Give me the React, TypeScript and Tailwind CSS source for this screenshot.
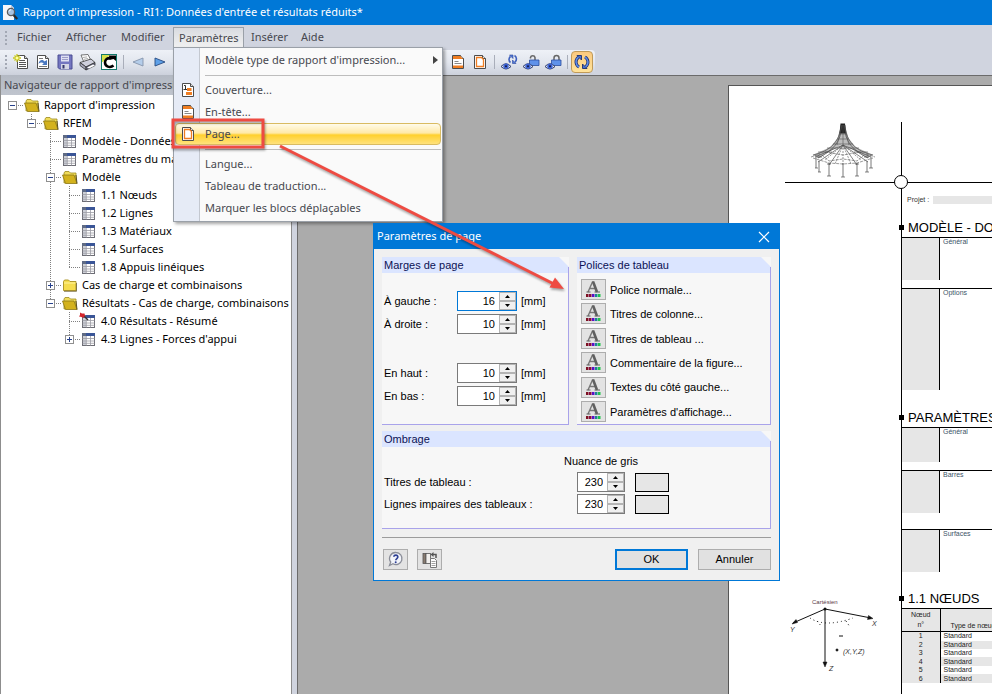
import type { ReactNode } from "react";
import clsx from "clsx";

/* ---------- icons ---------- */

function AppIcon() {
  return (
    <svg width="17" height="17" viewBox="0 0 17 17">
      <path d="M1 1h8l3 3v12H1z" fill="#f4f6fa" />
      <path d="M9 1v3h3z" fill="#b9c4d6" />
      <circle cx="9" cy="8" r="3.600" fill="#a9c4e2" stroke="#5b5b5b" strokeWidth="1.300" />
      <path d="M7 7.500a2.500 2.500 0 0 1 2-1.800" stroke="#fff" fill="none" />
      <path d="M11.600 11l3.600 4" stroke="#2b2b2b" strokeWidth="2.400" />
    </svg>
  );
}

function Sheet({ children }: { children?: ReactNode }) {
  return (
    <svg width="16" height="16" viewBox="0 0 16 16">
      <path d="M2.500 1.500h8l3 3v10h-11z" fill="#fff" stroke="#4d4d4d" />
      <path d="M10.500 1.500v3h3" fill="#ddd" stroke="#4d4d4d" />
      {children}
    </svg>
  );
}

function NewIcon() {
  return (
    <svg width="16" height="16" viewBox="0 0 16 16">
      <path d="M4.500 1.500h7l3 3v10h-10z" fill="#fff" stroke="#4d4d4d" />
      <path d="M11.500 1.500v3h3" fill="#ddd" stroke="#4d4d4d" />
      <path d="M6 6.500h6M6 8.500h7M6 10.500h7M6 12.500h7" stroke="#555" />
      <path d="M4 0v8M0 4h8M1.500 1.500l5 5M6.500 1.500l-5 5" stroke="#c8c81e" strokeWidth="1.300" />
      <circle cx="4" cy="4" r="1.500" fill="#ffffa0" />
    </svg>
  );
}

function OpenIcon() {
  return (
    <Sheet>
      <path d="M3.500 10C4 5.500 8 5 9.500 7.500L12 6v5H7l1.700-1.500C7.500 8 5 8 3.500 10z" fill="#4a78c0" />
      <path d="M4 12.500h8M4 4.500h4" stroke="#777" />
    </Sheet>
  );
}

function SaveIcon() {
  return (
    <svg width="16" height="16" viewBox="0 0 16 16">
      <path d="M1 1h14v14H2.500L1 13.500z" fill="#7476c0" stroke="#4a4c92" />
      <path d="M4 1.500h8v6H4z" fill="#dfe0f2" />
      <path d="M5 3.500h6M5 5.500h6" stroke="#9c9dc8" />
      <path d="M4 10h8v5H4z" fill="#d4d5e4" />
      <path d="M5.500 11h2v3.500h-2z" fill="#33356c" />
    </svg>
  );
}

function PrintIcon() {
  return (
    <svg width="17" height="17" viewBox="0 0 17 17">
      <path d="M2 1l7-.5 3 6-7 2z" fill="#fdfdfd" stroke="#555" strokeWidth="0.800" />
      <path d="M4 3.500l4-.6M5 5.300l4-.8" stroke="#999" strokeWidth="0.800" />
      <path d="M1 8.500L12 5l4 3.500-9 4.500z" fill="#cfd0dd" stroke="#333" strokeWidth="0.800" />
      <path d="M1 8.500v3L7 16v-3z" fill="#a5a6ba" stroke="#333" strokeWidth="0.800" />
      <path d="M7 13l9-4.500v3L7 16z" fill="#6b6c84" stroke="#333" strokeWidth="0.800" />
      <path d="M8 13.500l6-3 2 1-6 3z" fill="#fff" />
    </svg>
  );
}

function LogoIcon() {
  return (
    <svg width="16" height="16" viewBox="0 0 16 16">
      <rect x="0.500" y="0.500" width="15" height="15" fill="#fff" stroke="#127a6c" />
      <path d="M1 1h8L2 8H1z" fill="#d5e04a" />
      <path d="M12.500 11.500C9 14.500 4 12.500 4 8.500 4 5.500 6.500 3.800 9.500 4.200" fill="none" stroke="#000" strokeWidth="2.600" />
      <path d="M8 1.500h7V7l-2.500-2-4 1z" fill="#000" />
    </svg>
  );
}

function ArrowIcon({ back }: { back?: boolean }) {
  return (
    <svg width="12" height="10" viewBox="0 0 12 10">
      {back ? (
        <path d="M11 1v8L1 5z" fill="#b4cdea" stroke="#8694ac" strokeWidth="0.900" />
      ) : (
        <path d="M1 1v8l10-4z" fill="#5ea0e8" stroke="#274a80" strokeWidth="0.900" />
      )}
    </svg>
  );
}

function CoverIcon() {
  return (
    <Sheet>
      <path d="M4 3.500h1.500v4M3.500 7.500h4" stroke="#333" fill="none" />
      <path d="M7 6h4.500v3H7zM6 10h6v3H6z" fill="#ef7d22" />
    </Sheet>
  );
}

function HeaderIcon() {
  return (
    <Sheet>
      <path d="M3 2h7.500l2.500 3H3zM3 11.500h10V14H3z" fill="#ef7d22" />
      <path d="M4.500 7.500h4M4.500 9.500h7" stroke="#888" />
    </Sheet>
  );
}

function PageIcon() {
  return (
    <Sheet>
      <path d="M4.500 3.500h5l2 2v7h-7z" fill="#fff" stroke="#ef7d22" strokeWidth="1.300" />
    </Sheet>
  );
}

function Eye() {
  return (
    <>
      <path d="M0 12.500q5-5.500 10 0-5 5-10 0z" fill="#dfe6f5" stroke="#2e3c66" strokeWidth="1" />
      <circle cx="5" cy="12.300" r="2.700" fill="#3e63d2" />
      <circle cx="5" cy="12.300" r="1" fill="#111a44" />
    </>
  );
}

function EyeRefreshIcon() {
  return (
    <svg width="17" height="17" viewBox="0 0 17 17">
      <Eye />
      <path d="M9.500 8.500C7.500 7 7.500 4 9.500 2.500M13.500 1.500c2.500 1.500 2.500 5 .5 6.500" fill="none" stroke="#3d5fbe" strokeWidth="1.600" />
      <path d="M8.500 1h3.500v3.500zM15 9.500h-3.500V6z" fill="#4f78d8" stroke="#2c479c" strokeWidth="0.600" />
    </svg>
  );
}

function EyeLockIcon({ open }: { open?: boolean }) {
  return (
    <svg width="17" height="17" viewBox="0 0 17 17">
      <path
        d={open ? "M7.500 4.500v-1a2.300 2.300 0 0 1 4.500 0V6" : "M9 6V4a2.500 2.500 0 0 1 5 0v2"}
        fill="none"
        stroke="#666"
        strokeWidth="1.500"
      />
      <path d="M6.500 6h9.500v5.500h-9.500z" fill="#5f92ea" stroke="#2b4c9c" strokeWidth="0.800" />
      <Eye />
    </svg>
  );
}

function RefreshIcon() {
  return (
    <svg width="16" height="16" viewBox="0 0 16 16">
      <path d="M5 13C1.500 11 .8 6 4.500 3.200M11 3c3.500 2 4.200 7 .5 9.800" fill="none" stroke="#1e2f6c" strokeWidth="3" />
      <path d="M3 1.500h4.500V6zM13 14.500H8.500V10z" fill="#4470d8" stroke="#1e2f6c" strokeWidth="0.900" />
      <path d="M5 13C1.500 11 .8 6 4.500 3.200M11 3c3.500 2 4.200 7 .5 9.800" fill="none" stroke="#5d8cec" strokeWidth="1.500" />
    </svg>
  );
}

function FolderIcon({ open }: { open?: boolean }) {
  return open ? (
    <svg width="16" height="13" viewBox="0 0 16 13">
      <path d="M2 12V2l1-1.500h4L8.500 2H14v8z" fill="#f0dc5a" stroke="#9c8a20" strokeWidth="0.800" />
      <path d="M0.500 4H12l3 8.500H3.500z" fill="#d3b21e" stroke="#8b7714" strokeWidth="0.800" />
      <path d="M14 4l1 8.500" stroke="#5c5020" />
    </svg>
  ) : (
    <svg width="16" height="13" viewBox="0 0 16 13">
      <path d="M1.500 11.500v-9L2.500 1h4l1.500 1.500h6v9z" fill="#f5dc4e" stroke="#a8901e" strokeWidth="0.900" />
      <path d="M2 4h11.500" stroke="#fff3a0" />
      <path d="M2 12.300h12.500V4" fill="none" stroke="#6b6030" strokeWidth="0.800" />
    </svg>
  );
}

function TableIcon({ pinned }: { pinned?: boolean }) {
  return (
    <svg width="16" height="14" viewBox="0 0 16 14" className="overflow-visible">
      <rect x="1.500" y="1.500" width="12" height="12" fill="#fff" stroke="#6d6d75" />
      <rect x="1" y="1" width="13" height="3" fill="#3a5597" />
      <rect x="1" y="1" width="4" height="3" fill="#5f6b85" />
      <path d="M2 4h3v9H2z" fill="#cdd0d8" />
      <path d="M1.500 6.500h12M1.500 9h12M1.500 11.300h12M5.300 4v9.500M9.500 4v9.500" stroke="#9c9ca4" strokeWidth="0.800" />
      {pinned && (
        <>
          <path d="M3 2l4 4" stroke="#333" strokeWidth="1.400" />
          <path d="M-1-1.500l2 1L3.500-.5 4 1.500 3.500 2.500 2 4 .5 3-2 2.500-1 1z" fill="#d3262c" />
        </>
      )}
    </svg>
  );
}

function FontIcon() {
  return (
    <svg width="17" height="17" viewBox="0 0 17 17">
      <path d="M3 11L7.500 1h1M5 7.500h6" fill="none" stroke="#777" strokeWidth="1.400" />
      <path d="M8 0.500L12 11" stroke="#606060" strokeWidth="2.600" />
      <path d="M1.500 11h4M9.500 11H15" stroke="#606060" strokeWidth="1.200" />
      <rect x="1" y="13" width="2.500" height="3" fill="#7c1022" />
      <rect x="4" y="13" width="2.500" height="3" fill="#8a0a3c" />
      <rect x="7" y="13" width="2.500" height="3" fill="#5a10c8" />
      <rect x="10" y="13" width="2.500" height="3" fill="#1a8494" />
      <rect x="13" y="13" width="2.500" height="3" fill="#1fc44a" />
    </svg>
  );
}

function HelpIcon() {
  return (
    <svg width="17" height="17" viewBox="0 0 17 17">
      <path d="M9 1.500a6 6 0 1 1-3 11.200L2.500 14.500l1.200-3.500A6 6 0 0 1 9 1.500z" fill="#f2f4fa" stroke="#8a8d98" strokeWidth="1.300" />
      <path d="M6.800 5.800C7 3.500 11 3.500 10.800 6c0 1.500-2 1.600-2 3.300" fill="none" stroke="#2d3f94" strokeWidth="1.700" />
      <circle cx="8.700" cy="11.200" r="1" fill="#2d3f94" />
    </svg>
  );
}

function DefaultsIcon() {
  return (
    <svg width="18" height="18" viewBox="0 0 18 18">
      <rect x="2" y="2.500" width="3" height="10" fill="#8a7c70" stroke="#555" strokeWidth="0.800" />
      <rect x="5" y="2.500" width="4.500" height="10" fill="#f2f0ee" stroke="#555" strokeWidth="0.800" />
      <path d="M11.500 3.500H15V7" fill="none" stroke="#555" strokeWidth="1.500" />
      <path d="M12.500 1L9.500 3.500l3 2.500z" fill="#555" />
      <path d="M9.500 7.500h4l2 2v7h-6z" fill="#fff" stroke="#777" />
      <path d="M10.500 10.500h4M10.500 12.500h4M10.500 14.500h4" stroke="#888" strokeWidth="0.800" />
    </svg>
  );
}

function TentDrawing() {
  return (
    <svg width="66" height="58" viewBox="0 0 66 58" fill="none" stroke="#555" strokeWidth="0.600">
      <path d="M31.500 2h3l4 14 7 9 18 8-6 3-25-14-24 14-6-3 18-8 7-9z" fill="#bdbdbd" stroke="none" />
      <path d="M30.500 1.500h4.500l1 10h-6.500z" fill="#222" stroke="none" />
      <path d="M31 3C30 20 20 29 3 33M35 3c1 17 11 26 28 30M32 3c-1 18-10 26-24 33M34 3c1 18 10 26 24 33" stroke="#333" />
      <path d="M33 3v20M32 3l-5 20M34 3l5 20M29 12h8M27 17h12M23 22h20M17 26h32M8 30h14M44 30h14" />
      <path d="M33 23L19 43M33 23l14 20M33 23L8 40M33 23l25 17M33 23L5 35M33 23l28 12" stroke="#333" />
      <path d="M33 23v20M33 23l-8 19M33 23l8 19M33 23l-18 15M33 23l18 15" strokeDasharray="2 1" />
      <path d="M1 35l9-3M56 32l9 3M3 36l16 5 14 1 14-1 16-5M12 33l7 6 14-2 14 2 7-6M15 30l18 3 18-3" strokeDasharray="3 1" />
      <path d="M6 35v11M9 39v11M19 41v13M33 41v14M47 41v13M57 39v11M61 35v11" stroke="#555" strokeWidth="0.800" />
      <path d="M5 46h3M8 50h3M17 54h4M31 55h4M45 54h4M55 50h4M59 46h4M7 35h5M54 35h5M17 42h4M45 42h4" stroke="#333" />
    </svg>
  );
}

function AxesDrawing() {
  return (
    <svg width="96" height="76" viewBox="0 0 96 76" stroke="#111" fill="none" className="font-['Liberation_Sans',Arial,sans-serif]">
      <path d="M40 12L8 26M40 12l46 9M40 12v55" />
      <path d="M7 27l4-4.500 1.500 3zM88 21.500l-4.500-3-1 4zM40 70l-2-5h4z" fill="#111" strokeWidth="0.500" />
      <circle cx="40" cy="12" r="1.500" fill="#111" stroke="none" />
      <path d="M25 21q15 10 43 0M32 24l5 6M61 24l4 6" strokeDasharray="1 3" />
      <path d="M54 39h4" />
      <circle cx="52" cy="53" r="1" fill="#111" />
      <g fill="#333" stroke="none" fontSize="7" fontStyle="italic">
        <text x="27" y="7" fontStyle="normal" fontSize="6" fill="#5a3a48">Cartésien</text>
        <text x="5" y="35">Y</text>
        <text x="87" y="29">X</text>
        <text x="44" y="74">Z</text>
        <text x="58" y="57">(X,Y,Z)</text>
      </g>
    </svg>
  );
}

/* ---------- menu bar & toolbar ---------- */

function Grip() {
  return (
    <span className="flex w-2 flex-col items-center gap-[2px]">
      <i className="size-[2px] bg-[#a3a8b4]" />
      <i className="size-[2px] bg-[#a3a8b4]" />
      <i className="size-[2px] bg-[#a3a8b4]" />
      <i className="size-[2px] bg-[#a3a8b4]" />
    </span>
  );
}

function MenuItem({ label, icon, active, submenu }: { label: string; icon?: ReactNode; active?: boolean; submenu?: boolean }) {
  return (
    <button
      type="button"
      role="menuitem"
      className={clsx(
        "flex h-[22px] w-full items-center rounded-sm border pl-1 text-left",
        active
          ? "border-[#d9bb62] bg-[linear-gradient(#fffbea_0%,#ffe9a8_45%,#ffd02e_55%,#ffe27c_100%)]"
          : "border-transparent",
      )}
    >
      <span className="flex w-[25px] shrink-0">{icon}</span>
      <span className="flex-1 whitespace-nowrap">{label}</span>
      {submenu && (
        <svg width="5" height="8" viewBox="0 0 5 8" className="mr-[2px]">
          <path d="M0 0v8l5-4z" fill="#444" />
        </svg>
      )}
    </button>
  );
}

function MenuSeparator() {
  return <div className="mt-1 mb-[3px] ml-[30px] h-px bg-[#bdbdbd]" />;
}

function ParametersMenu() {
  return (
    <div
      role="menu"
      className="absolute -left-px top-[19px] z-20 w-[270px] border border-[#9aa0a8] bg-[linear-gradient(90deg,#e6ebf6_25px,#c4c8d0_25px,#c4c8d0_26px,#fafafa_26px)] px-px pt-px pb-[2px] shadow-[2px_2px_3px_rgba(0,0,0,0.35)]"
    >
      <MenuItem label="Modèle type de rapport d'impression..." submenu />
      <MenuSeparator />
      <MenuItem label="Couverture..." icon={<CoverIcon />} />
      <MenuItem label="En-tête..." icon={<HeaderIcon />} />
      <MenuItem label="Page..." icon={<PageIcon />} active />
      <MenuSeparator />
      <MenuItem label="Langue..." />
      <MenuItem label="Tableau de traduction..." />
      <MenuItem label="Marquer les blocs déplaçables" />
    </div>
  );
}

function MenuBar() {
  return (
    <nav className="flex h-[25px] items-center pl-[2px] text-[11px] text-[#47484f]">
      <Grip />
      <button type="button" className="ml-[7px] w-[35px] text-left">Fichier</button>
      <button type="button" className="ml-[14px] w-[40px] text-left">Afficher</button>
      <button type="button" className="ml-[15px] w-[44px] text-left">Modifier</button>
      <div className="relative ml-2 h-[21px] border border-b-0 border-[#9aa0a8] bg-gradient-to-b from-[#d9dbe0] to-[#f2f2f2] px-[5px]">
        <button type="button" aria-haspopup="menu" aria-expanded="true" className="h-full w-[59px] text-left">
          Paramètres
        </button>
        <ParametersMenu />
      </div>
      <button type="button" className="ml-[7px] w-[36px] text-left">Insérer</button>
      <button type="button" className="ml-[14px]">Aide</button>
    </nav>
  );
}

function Tool({ label, children, active }: { label: string; children: ReactNode; active?: boolean }) {
  return (
    <button
      type="button"
      aria-label={label}
      className={clsx(
        "flex h-[22px] w-[22px] items-center justify-center",
        active && "rounded-sm border border-[#c09a58] bg-gradient-to-b from-[#fbc97e] to-[#ffe39a]",
      )}
    >
      {children}
    </button>
  );
}

function Divider() {
  return <span className="mx-[3px] h-[14px] w-px bg-[#a9aeba]" />;
}

function Toolbar() {
  return (
    <div className="flex h-[25px] w-[595px] items-center rounded-r bg-gradient-to-b from-[#eef1f7] via-[#e2e6ee] to-[#ccd1dc] pr-[2px] pb-px pl-[2px]">
      <Grip />
      <Tool label="Nouveau"><NewIcon /></Tool>
      <Tool label="Ouvrir"><OpenIcon /></Tool>
      <Tool label="Enregistrer"><SaveIcon /></Tool>
      <Tool label="Imprimer"><PrintIcon /></Tool>
      <Tool label="Dlubal"><LogoIcon /></Tool>
      <Divider />
      <Tool label="Précédent"><ArrowIcon back /></Tool>
      <Tool label="Suivant"><ArrowIcon /></Tool>
      <span className="flex-1" />
      <Tool label="En-tête"><HeaderIcon /></Tool>
      <Tool label="Page"><PageIcon /></Tool>
      <Divider />
      <Tool label="Actualiser la vue"><EyeRefreshIcon /></Tool>
      <Tool label="Déverrouiller"><EyeLockIcon open /></Tool>
      <Tool label="Verrouiller"><EyeLockIcon /></Tool>
      <Divider />
      <Tool label="Actualiser" active><RefreshIcon /></Tool>
    </div>
  );
}

/* ---------- navigator ---------- */

type Node = {
  label: string;
  level: number;
  icon: "open" | "closed" | "table" | "pinned";
  toggle?: "+" | "-";
  last?: boolean;
  guide?: boolean; // parent's branch continues below this row
};

const nodes: Node[] = [
  { label: "Rapport d'impression", level: 0, icon: "open", toggle: "-" },
  { label: "RFEM", level: 1, icon: "open", toggle: "-", last: true },
  { label: "Modèle - Données", level: 2, icon: "table" },
  { label: "Paramètres du maillage", level: 2, icon: "table" },
  { label: "Modèle", level: 2, icon: "open", toggle: "-" },
  { label: "1.1 Nœuds", level: 3, icon: "table", guide: true },
  { label: "1.2 Lignes", level: 3, icon: "table", guide: true },
  { label: "1.3 Matériaux", level: 3, icon: "table", guide: true },
  { label: "1.4 Surfaces", level: 3, icon: "table", guide: true },
  { label: "1.8 Appuis linéiques", level: 3, icon: "table", guide: true, last: true },
  { label: "Cas de charge et combinaisons", level: 2, icon: "closed", toggle: "+" },
  { label: "Résultats - Cas de charge, combinaisons", level: 2, icon: "open", toggle: "-", last: true },
  { label: "4.0 Résultats - Résumé", level: 3, icon: "pinned" },
  { label: "4.3 Lignes - Forces d'appui", level: 3, icon: "table", toggle: "+", last: true },
];

function Branch({ node }: { node: Node }) {
  return (
    <svg width="21" height="18" viewBox="0 0 21 18" fill="none" stroke="#808080" className="shrink-0">
      {node.level > 0 && <path d={node.last ? "M9.500 0v10" : "M9.500 0v18"} strokeDasharray="1 1" />}
      <path d="M9 9.500h12" strokeDasharray="1 1" />
      {node.toggle && (
        <>
          <rect x="5.500" y="5.500" width="8" height="8" fill="#fff" stroke="#8f8f8f" />
          <path d={node.toggle === "+" ? "M7 9.500h5M9.500 7v5" : "M7 9.500h5"} stroke="#27418c" />
        </>
      )}
    </svg>
  );
}

function TreeRow({ node }: { node: Node }) {
  return (
    <li className="flex h-[18px] items-center whitespace-nowrap">
      {Array.from({ length: node.level }, (_, i) => (
        <svg key={i} width="19" height="18" viewBox="0 0 19 18" className="shrink-0">
          {node.guide && i === 2 && <path d="M9.500 0v18" stroke="#808080" strokeDasharray="1 1" />}
        </svg>
      ))}
      <Branch node={node} />
      <span className="flex w-5 shrink-0">
        {node.icon === "open" && <FolderIcon open />}
        {node.icon === "closed" && <FolderIcon />}
        {node.icon === "table" && <TableIcon />}
        {node.icon === "pinned" && <TableIcon pinned />}
      </span>
      <span>{node.label}</span>
    </li>
  );
}

function Navigator() {
  return (
    <aside className="flex w-[292px] shrink-0 flex-col overflow-hidden border-x border-[#8d8d8d] bg-white text-[11px]">
      <h2 className="h-5 shrink-0 whitespace-nowrap bg-gradient-to-b from-[#b3b9c3] to-[#c0c5ce] pl-[3px] leading-5 text-[#47484f]">
        Navigateur de rapport d'impression
      </h2>
      <ul className="pt-px pl-[2px] text-black">
        {nodes.map((n) => (
          <TreeRow key={n.label} node={n} />
        ))}
      </ul>
    </aside>
  );
}

/* ---------- printout page ---------- */

function Title({ children }: { children: ReactNode }) {
  return (
    <h3 className="relative h-5 pl-[6px] text-[13px] leading-[22px] whitespace-nowrap text-black">
      <i className="absolute top-2 -left-[3px] size-[5px] bg-black" />
      {children}
    </h3>
  );
}

function Block({ label, className }: { label: string; className: string }) {
  return (
    <div className="border-t border-black">
      <div className={clsx("flex", className)}>
        <div className="w-[38px] border-r border-black bg-[#e6e6e6]" />
        <p className="pl-[3px] text-[7px] leading-[8px] text-[#3c5468]">{label}</p>
      </div>
    </div>
  );
}

function ReportPage() {
  return (
    <article className="ml-[430px] mt-[9px] min-w-[400px] flex-1 border-t border-l border-[#555] bg-white pt-9 font-['Liberation_Sans',Arial,sans-serif]">
      <header className="flex h-[60px]">
        <div className="w-[172px] shrink-0 pl-[81px]">
          <TentDrawing />
        </div>
        <div className="flex-1 border-l border-black" />
      </header>
      <div className="relative ml-14 h-px bg-black">
        <i className="absolute -top-[7px] left-[109px] size-[14px] rounded-full border border-black bg-white" />
      </div>
      <div className="flex min-h-[520px]">
        <div className="w-[172px] shrink-0 pt-[414px] pl-[56px]">
          <AxesDrawing />
        </div>
        <div className="flex-1 border-l border-black pt-3">
          <div className="flex h-[9px] items-center gap-1 pl-[5px] text-[7px] leading-[8px] text-[#333]">
            <span>Projet :</span>
            <span className="h-2 flex-1 bg-[#e6e6e6]" />
          </div>
          <div className="h-[13px]" />
          <Title>MODÈLE - DONNÉES</Title>
          <Block label="Général" className="h-[42px]" />
          <div className="h-2" />
          <Block label="Options" className="h-[101px]" />
          <div className="h-[17px]" />
          <Title>PARAMÈTRES</Title>
          <Block label="Général" className="h-[34px]" />
          <div className="h-2" />
          <Block label="Barres" className="h-[42px]" />
          <div className="h-4" />
          <Block label="Surfaces" className="h-[42px]" />
          <div className="h-4" />
          <Title>1.1 NŒUDS</Title>
          <table className="h-[75px] w-full border-collapse border-t border-black text-[7px] leading-[8px] text-[#222]">
            <thead>
              <tr className="h-[23px] border-b border-black bg-[#e6e6e6]">
                <th className="w-[38px] border-r border-black text-center leading-[10px] font-normal">
                  Nœud
                  <br />
                  n°
                </th>
                <th className="pl-[10px] text-left align-bottom leading-[10px] font-normal whitespace-nowrap">Type de nœud</th>
              </tr>
            </thead>
            <tbody>
              {[1, 2, 3, 4, 5, 6].map((n) => (
                <tr key={n} className="even:bg-[#e6e6e6]">
                  <td className="border-r border-black bg-[#e6e6e6] text-center">{n}</td>
                  <td className="pl-[3px]">Standard</td>
                </tr>
              ))}
            </tbody>
          </table>
        </div>
      </div>
    </article>
  );
}

/* ---------- dialog ---------- */

function Group({ title, className, children }: { title: string; className?: string; children: ReactNode }) {
  return (
    <div role="group" aria-label={title} className={clsx("relative flex flex-col border-b border-[#a9a3ea] bg-[#f7f7f7]", className)}>
      <h3 className="h-4 bg-[#dbe5ff] pl-[2px] leading-4 text-[#0c1254] [clip-path:polygon(0_0,calc(100%-10px)_0,100%_10px,100%_100%,0_100%)]">
        {title}
      </h3>
      <i className="absolute top-[10px] right-0 bottom-0 w-px bg-[#a9a3ea]" />
      {children}
    </div>
  );
}

function Spin({ id, value, focused, narrow }: { id: string; value: number; focused?: boolean; narrow?: boolean }) {
  return (
    <span className={clsx("flex h-5 border bg-white", narrow ? "w-12" : "w-[60px]", focused ? "border-[#0078d7]" : "border-[#7a7a7a]")}>
      <input id={id} type="text" defaultValue={value} className="w-full min-w-0 flex-1 pr-1 text-right outline-none" />
      <span className="flex w-[17px] shrink-0 flex-col bg-[#f0f0f0]">
        <button type="button" aria-label="Augmenter" className="flex flex-1 items-center justify-center border border-[#b4b4b4]">
          <svg width="5" height="3" viewBox="0 0 5 3"><path d="M0 3h5L2.500 0z" /></svg>
        </button>
        <button type="button" aria-label="Diminuer" className="flex flex-1 items-center justify-center border border-[#b4b4b4]">
          <svg width="5" height="3" viewBox="0 0 5 3"><path d="M0 0h5L2.500 3z" /></svg>
        </button>
      </span>
    </span>
  );
}

function MarginRow({ id, label, value, focused }: { id: string; label: string; value: number; focused?: boolean }) {
  return (
    <div className="flex items-center">
      <label htmlFor={id} className="w-[73px]">{label}</label>
      <Spin id={id} value={value} focused={focused} />
      <span className="ml-1">[mm]</span>
    </div>
  );
}

function ShadeRow({ id, label }: { id: string; label: string }) {
  return (
    <div className="flex items-center">
      <label htmlFor={id} className="w-[193px]">{label}</label>
      <Spin id={id} value={230} narrow />
      <span className="ml-[10px] h-[19px] w-[34px] border border-black bg-[#e6e6e6]" />
    </div>
  );
}

const fontButtons = [
  "Police normale...",
  "Titres de colonne...",
  "Titres de tableau ...",
  "Commentaire de la figure...",
  "Textes du côté gauche...",
  "Paramètres d'affichage...",
];

function PageDialog() {
  return (
    <section
      role="dialog"
      aria-label="Paramètres de page"
      className="absolute top-[223px] left-[373px] z-30 w-[407px] border border-[#0078d7] bg-[#f0f0f0] text-[11px] text-black"
    >
      <header className="flex h-[25px] items-center justify-between bg-[#0078d7] pr-[9px] pl-[3px] text-white">
        <h2>Paramètres de page</h2>
        <button type="button" aria-label="Fermer">
          <svg width="12" height="12" viewBox="0 0 12 12"><path d="M1 1l10 10M11 1L1 11" stroke="#fff" strokeWidth="1.200" /></svg>
        </button>
      </header>

      <div className="px-2 pt-2 pb-[10px] font-['Liberation_Sans',Arial,sans-serif]">
        <div className="flex gap-2">
          <Group title="Marges de page" className="w-[187px]">
            <div className="flex flex-col gap-[3px] pt-[18px] pl-[2px]">
              <MarginRow id="left" label="À gauche :" value={16} focused />
              <MarginRow id="right" label="À droite :" value={10} />
              <div className="h-[23px]" />
              <MarginRow id="top" label="En haut :" value={10} />
              <MarginRow id="bottom" label="En bas :" value={10} />
            </div>
          </Group>
          <Group title="Polices de tableau" className="h-[168px] flex-1">
            <div className="flex flex-1 flex-col justify-between pt-[6px] pb-[2px] pl-1">
              {fontButtons.map((label, i) => (
                <div key={label} className="flex items-center gap-1">
                  <button
                    type="button"
                    id={`font-${i}`}
                    className="flex h-[21px] w-[25px] items-center justify-center border border-[#adadad] bg-[#e3e3e3]"
                  >
                    <FontIcon />
                  </button>
                  <label htmlFor={`font-${i}`} className="pt-px">{label}</label>
                </div>
              ))}
            </div>
          </Group>
        </div>

        <Group title="Ombrage" className="mt-[6px] h-[98px]">
          <div className="pt-[6px] pl-[2px]">
            <p className="pl-[180px] leading-4">Nuance de gris</p>
            <div className="mt-[3px] flex flex-col gap-[2px]">
              <ShadeRow id="shade-titles" label="Titres de tableau :" />
              <ShadeRow id="shade-rows" label="Lignes impaires des tableaux :" />
            </div>
          </div>
        </Group>

        <hr className="mt-2 border-[#9c9c9c]" />

        <footer className="mt-[11px] flex h-[21px] pl-px">
          <button type="button" aria-label="Aide" className="flex w-[25px] items-center justify-center border border-[#adadad] bg-[#e3e3e3]">
            <HelpIcon />
          </button>
          <button type="button" aria-label="Valeurs par défaut" className="ml-[9px] flex w-[25px] items-center justify-center border border-[#adadad] bg-[#e3e3e3]">
            <DefaultsIcon />
          </button>
          <button type="button" className="ml-auto w-[73px] border-2 border-[#0078d7] bg-[#e1e1e1]">OK</button>
          <button type="button" className="ml-[10px] w-[73px] border border-[#adadad] bg-[#e1e1e1]">Annuler</button>
        </footer>
      </div>
    </section>
  );
}

// Red frame around the menu entry and the arrow to the dialog
function Annotation() {
  return (
    <svg width="400" height="180" viewBox="0 0 400 180" className="pointer-events-none absolute top-[117px] left-[170px] z-40 drop-shadow-[1px_2px_1px_rgba(0,0,0,0.35)]">
      <rect x="3" y="3" width="90" height="27" fill="none" stroke="#ee4b42" strokeWidth="3" />
      <path d="M110 29L384 167" stroke="#ee4b42" strokeWidth="3" />
      <path d="M394 172l-14.500-1.500 5.500-10z" fill="#ee4b42" />
    </svg>
  );
}

export default function App() {
  return (
    <div className="relative flex h-screen flex-col overflow-hidden bg-[#d0d4df] font-['Noto_Sans','Open_Sans',sans-serif]">
      <header className="flex h-[25px] shrink-0 items-center gap-1 bg-[#0078d7] pl-[2px] text-[11px] text-white">
        <AppIcon />
        <h1>Rapport d'impression - RI1: Données d'entrée et résultats réduits*</h1>
      </header>
      <MenuBar />
      <Toolbar />
      <main className="flex min-h-0 flex-1">
        <Navigator />
        <div className="w-[5px] shrink-0 bg-[#d0d4df]" />
        <div className="flex min-w-0 flex-1 overflow-hidden border-t border-l border-[#6b6b6b] bg-[#ababab]">
          <ReportPage />
        </div>
      </main>
      <PageDialog />
      <Annotation />
    </div>
  );
}
